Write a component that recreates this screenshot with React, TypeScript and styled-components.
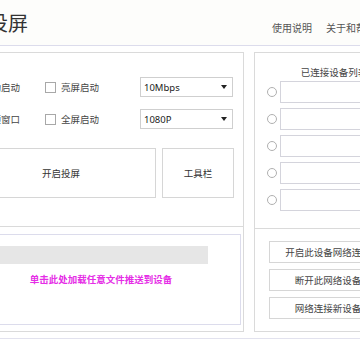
import React from 'react';
import styled, { createGlobalStyle } from 'styled-components';

const GlobalStyle = createGlobalStyle`
  html, body {
    margin: 0;
    padding: 0;
    background: #ffffff;
    overflow: hidden;
  }
  body {
    font-family: "Noto Sans CJK SC", "Noto Sans", sans-serif;
    color: #404040;
  }
`;

const Page = styled.div`
  width: 470px;
  margin-left: -60px;
`;

const Header = styled.header`
  height: 45px;
  display: flex;
  align-items: center;
  justify-content: space-between;
  padding: 0 34px 0 8px;
  background: #fdfdfb;
  border-bottom: 1px solid #dcdcec;
`;

const Title = styled.h1`
  margin: 0;
  font-size: 20px;
  font-weight: 400;
  color: #333;
  line-height: 1;
`;

const Links = styled.nav`
  display: flex;
  gap: 14px;
  margin-top: 10px;
`;

const Link = styled.span`
  font-size: 10px;
  color: #555;
`;

const Content = styled.main`
  display: flex;
  gap: 10px;
  padding: 6px 0 6px 17px;
  border-bottom: 1px solid #e2e2ee;
`;

const Panel = styled.section<{ $width: number }>`
  box-sizing: border-box;
  width: ${p => p.$width}px;
  height: 280px;
  border: 1px solid #dadada;
  display: flex;
  flex-direction: column;
`;

const OptionsArea = styled.div`
  height: 173px;
  box-sizing: border-box;
  padding: 24px 0 0 8px;
  display: flex;
  flex-direction: column;
`;

const OptionRow = styled.div`
  display: grid;
  grid-template-columns: 79px 95px 93px;
  align-items: center;
  height: 20px;
  & + & {
    margin-top: 12px;
  }
`;

const Check = styled.label`
  display: flex;
  align-items: center;
  gap: 5px;
  font-size: 9.5px;
  color: #444;
  white-space: nowrap;
`;

const Box = styled.span`
  width: 9px;
  height: 9px;
  border: 1px solid #a8a8a8;
  background: #fff;
`;

const Select = styled.div`
  box-sizing: border-box;
  height: 20px;
  border: 1px solid #cfcfcf;
  display: flex;
  align-items: center;
  justify-content: space-between;
  padding: 0 5px 0 3px;
  font-family: "Noto Sans", sans-serif;
  font-size: 9.5px;
  color: #222;
  background: #fff;
`;

const Arrow = styled.span`
  width: 0;
  height: 0;
  border-left: 3px solid transparent;
  border-right: 3px solid transparent;
  border-top: 4px solid #222;
`;

const ActionRow = styled.div`
  display: flex;
  gap: 6px;
  margin-top: 19px;
`;

const BigButton = styled.button<{ $width: number }>`
  box-sizing: border-box;
  width: ${p => p.$width}px;
  height: 50px;
  border: 1px solid #d6d6d6;
  background: #fff;
  font-family: inherit;
  font-size: 9.5px;
  color: #333;
  padding: 0;
`;

const PushArea = styled.div`
  flex: 1;
  border-top: 1px solid #dadada;
  padding: 7px 2px 6px 3px;
  display: flex;
`;

const PushBox = styled.div`
  flex: 1;
  border: 1px solid #dcdcec;
  padding: 11px 32px 0 32px;
  display: flex;
  flex-direction: column;
  align-items: stretch;
`;

const Progress = styled.div`
  height: 18px;
  background: #e6e6e6;
`;

const PushHint = styled.div`
  margin-top: 8px;
  line-height: 14px;
  text-align: center;
  font-size: 9.5px;
  font-weight: 700;
  color: #e52de6;
`;

const DeviceArea = styled.div`
  height: 175px;
  box-sizing: border-box;
  padding: 12px 6px 0 12px;
`;

const DeviceTitle = styled.div`
  line-height: 14px;
  font-size: 9.5px;
  color: #444;
  text-align: center;
  padding-left: 6px;
`;

const DeviceList = styled.div`
  margin-top: 2px;
  display: flex;
  flex-direction: column;
  gap: 5px;
`;

const DeviceRow = styled.div`
  display: flex;
  align-items: center;
  gap: 3px;
`;

const Radio = styled.span`
  width: 8px;
  height: 8px;
  border: 1px solid #b0b0b0;
  border-radius: 50%;
  flex: none;
`;

const DeviceField = styled.div`
  flex: 1;
  height: 22px;
  box-sizing: border-box;
  border: 1px solid #d4d4dc;
  background: #fff;
`;

const NetArea = styled.div`
  flex: 1;
  border-top: 1px solid #dadada;
  padding: 12px 14px 0 14px;
  display: flex;
  flex-direction: column;
  gap: 6px;
`;

const NetButton = styled.button`
  height: 22px;
  border: 1px solid #d6d6d6;
  background: #fff;
  font-family: inherit;
  font-size: 9.5px;
  color: #444;
  padding: 0;
`;

const devices = [0, 1, 2, 3, 4];

export default function App() {
  return (
    <Page>
      <GlobalStyle />
      <Header>
        <Title>手机投屏</Title>
        <Links>
          <Link>使用说明</Link>
          <Link>关于和帮助</Link>
        </Links>
      </Header>
      <Content>
        <Panel $width={287}>
          <OptionsArea>
            <OptionRow>
              <Check><Box />自动启动</Check>
              <Check><Box />亮屏启动</Check>
              <Select>10Mbps<Arrow /></Select>
            </OptionRow>
            <OptionRow>
              <Check><Box />置顶窗口</Check>
              <Check><Box />全屏启动</Check>
              <Select>1080P<Arrow /></Select>
            </OptionRow>
            <ActionRow>
              <BigButton $width={190}>开启投屏</BigButton>
              <BigButton $width={72}>工具栏</BigButton>
            </ActionRow>
          </OptionsArea>
          <PushArea>
            <PushBox>
              <Progress />
              <PushHint>单击此处加载任意文件推送到设备</PushHint>
            </PushBox>
          </PushArea>
        </Panel>
        <Panel $width={148}>
          <DeviceArea>
            <DeviceTitle>已连接设备列表</DeviceTitle>
            <DeviceList>
              {devices.map(i => (
                <DeviceRow key={i}>
                  <Radio />
                  <DeviceField />
                </DeviceRow>
              ))}
            </DeviceList>
          </DeviceArea>
          <NetArea>
            <NetButton>开启此设备网络连接</NetButton>
            <NetButton>断开此网络设备</NetButton>
            <NetButton>网络连接新设备</NetButton>
          </NetArea>
        </Panel>
      </Content>
    </Page>
  );
}
